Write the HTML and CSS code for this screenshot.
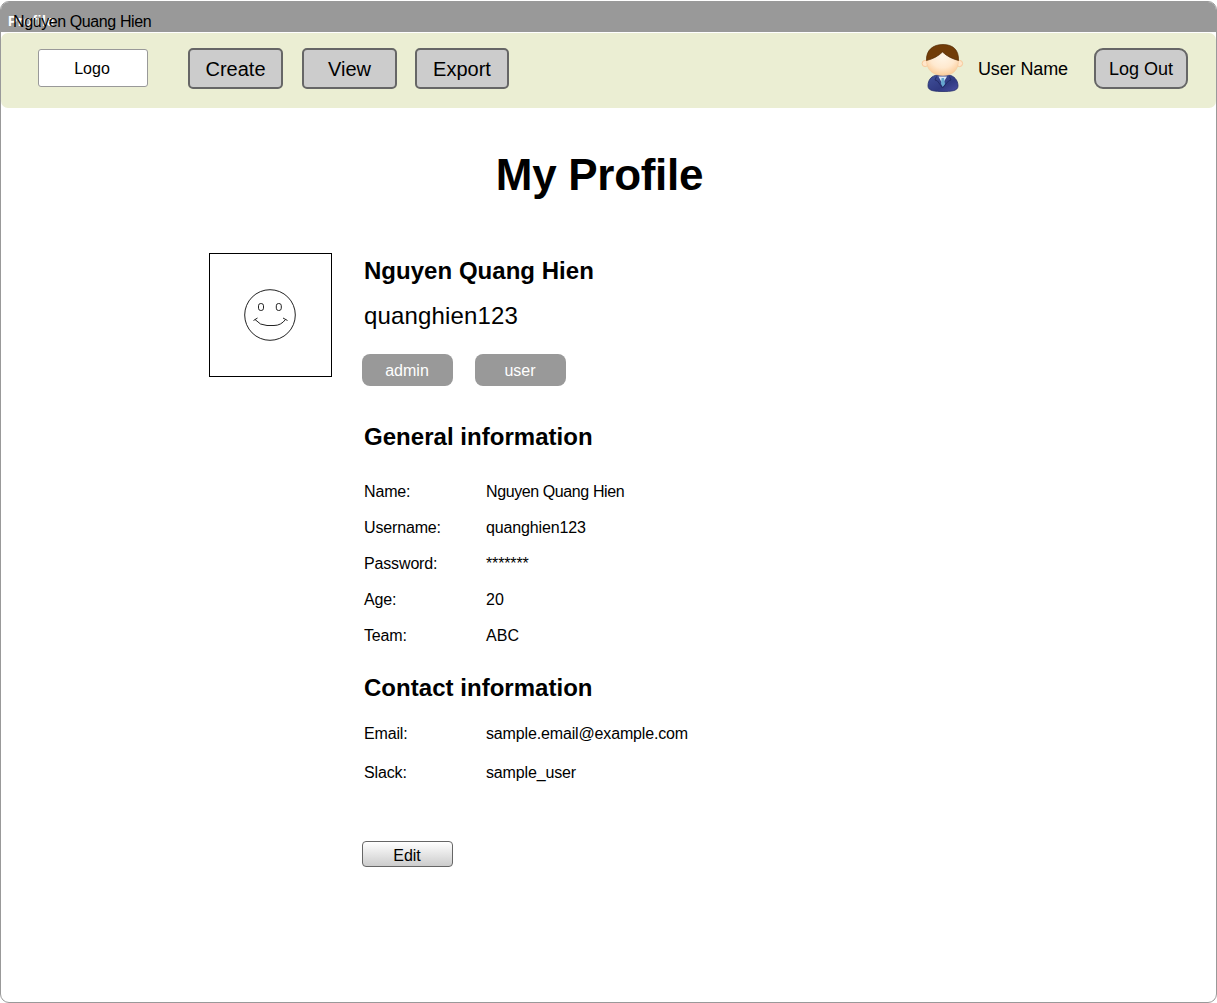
FILE: index.html
```html
<!DOCTYPE html>
<html lang="en">
<head>
<meta charset="utf-8">
<title>My Profile</title>
<link rel="stylesheet" href="styles.css">
</head>
<body>
<div class="window">
  <div class="titlebar">
    <span class="window-title">Profile</span>
    <span class="window-user">Nguyen Quang Hien</span>
  </div>
  <header class="header">
    <div class="logo">Logo</div>
    <nav class="nav">
      <button class="button">Create</button>
      <button class="button">View</button>
      <button class="button button-export">Export</button>
    </nav>
    <div class="account">
      <svg class="person" width="44" height="52" viewBox="0 0 44 52">
        <defs>
          <radialGradient id="skin" cx="50%" cy="35%" r="65%">
            <stop offset="0" stop-color="#fff6e8"/><stop offset=".6" stop-color="#ffe9cf"/><stop offset="1" stop-color="#fbcd9b"/>
          </radialGradient>
          <linearGradient id="suit" x1="0" y1="0" x2="1" y2="1">
            <stop offset="0" stop-color="#41519b"/><stop offset=".6" stop-color="#303a82"/><stop offset="1" stop-color="#4b4fa4"/>
          </linearGradient>
        </defs>
        <path d="M7 44C7 37 11 34 16 33H28C33 34 37 38 37 44C37 49 30 49.500 22 49.500S7 49 7 44Z" fill="url(#suit)" stroke="#252d69" stroke-width=".8"/>
        <circle cx="4.200" cy="21.500" r="3.100" fill="#ffe6ca" stroke="#f7c99b"/>
        <circle cx="38.500" cy="21.500" r="3.100" fill="#ffe6ca" stroke="#f7c99b"/>
        <path d="M5.500 18C5.500 9 13 4 22 4S37.500 9 37.500 18C37.500 28 32 33.500 22 33.500S5.500 28 5.500 18Z" fill="url(#skin)" stroke="#f5c99c" stroke-width=".6"/>
        <path d="M17.500 34.500L21.500 42L26 34.500Z" fill="#dce9f8"/>
        <path d="M20.500 36H23L24 42L21.800 45L20 42Z" fill="#65a6cf"/>
        <path d="M15.500 34.500L14 38L16.500 39L21.500 46L27.500 39L30 38L28.500 34.500" fill="none" stroke="#202963" stroke-width=".9"/>
        <path d="M5.500 18.500C5 8 12 2.500 22 2.500S38 8 37.500 18.500C32 17 26 14.500 21.500 10C17.500 14 12 17 5.500 18.500Z" fill="#713c08" stroke="#512905" stroke-width=".7"/>
      </svg>
      <span class="account-name">User Name</span>
      <button class="button button-logout">Log Out</button>
    </div>
  </header>
  <h1 class="page-title">My Profile</h1>
  <main class="profile">
    <svg class="picture" width="123" height="125" viewBox="0 0 123 125" fill="none" stroke="#000">
      <rect x=".5" y=".5" width="122" height="123"/>
      <g stroke="#222">
        <circle cx="61" cy="62" r="25.300"/>
        <rect x="49.500" y="50.500" width="5" height="7" rx="2.300"/>
        <rect x="67.300" y="50.500" width="5" height="7" rx="2.300"/>
        <path d="M44.500 67.500L48.500 65M74 65L78.500 67.500M46 66.500Q51 72.500 58 72.500H65Q72 72.500 76.500 66.500"/>
      </g>
    </svg>
    <div class="details">
      <h2 class="heading">Nguyen Quang Hien</h2>
      <p class="handle">quanghien123</p>
      <div class="roles"><span class="role">admin</span><span class="role">user</span></div>
      <h2 class="heading general">General information</h2>
      <dl class="fields">
        <dt>Name:</dt><dd class="tight">Nguyen Quang Hien</dd>
        <dt>Username:</dt><dd>quanghien123</dd>
        <dt>Password:</dt><dd>*******</dd>
        <dt>Age:</dt><dd class="wide">20</dd>
        <dt>Team:</dt><dd class="wide">ABC</dd>
      </dl>
      <h2 class="heading contact">Contact information</h2>
      <dl class="fields contact-fields">
        <dt>Email:</dt><dd>sample.email@example.com</dd>
        <dt>Slack:</dt><dd>sample_user</dd>
      </dl>
      <button class="edit">Edit</button>
    </div>
  </main>
</div>
</body>
</html>
```
FILE: styles.css
```css
* { box-sizing: border-box; }
body {
  margin: 0;
  padding-top: 1px;
  background: #fff;
  color: #000;
  font: 16px/20px "Liberation Sans", Arial, sans-serif;
}
h1, h2, p, dl, dd { margin: 0; }
button { font-family: inherit; color: #000; padding: 2px 0 0; }
.window {
  height: 1002px;
  border: 1px solid #999;
  border-radius: 9px;
  overflow: hidden;
}
.titlebar {
  position: relative;
  height: 30px;
  padding: 9px 7px;
  background: #999;
}
.window-title { display: block; color: #fff; font-size: 14px; font-weight: bold; letter-spacing: .4px; }
.window-user { position: absolute; left: 12px; top: 10px; letter-spacing: -.4px; white-space: nowrap; }
.header {
  display: flex;
  align-items: flex-start;
  height: 75px;
  margin-top: 1px;
  padding: 15px 28px 0 37px;
  border-radius: 7px;
  background: #ebeed3;
}
.logo {
  width: 110px;
  height: 38px;
  margin-top: 1px;
  padding-right: 2px;
  border: 1px solid #999;
  border-radius: 3px;
  background: #fff;
  line-height: 37px;
  text-align: center;
}
.nav { display: flex; gap: 19px; margin-left: 40px; }
.button {
  width: 95px;
  height: 41px;
  border: 2px solid #666;
  border-radius: 5px;
  background: #ccc;
  font-size: 20px;
}
.button-export { width: 94px; margin-left: -1px; }
.account { display: flex; align-items: flex-start; margin-left: auto; }
.person { margin-top: -6px; }
.account-name { margin: 11px 26px 0 13px; font-size: 18px; letter-spacing: -.1px; white-space: nowrap; }
.button-logout { width: 94px; border-radius: 9px; font-size: 18px; }
.page-title {
  height: 145px;
  padding: 42px 18px 0 0;
  font-size: 44px;
  line-height: 50px;
  letter-spacing: -.3px;
  text-align: center;
}
.profile { display: flex; gap: 30px; padding-left: 208px; }
.picture { flex: none; }
.details { width: 360px; }
.heading { padding: 4px 0 0 2px; font-size: 24px; line-height: 28px; letter-spacing: .03px; }
.handle { margin-top: 16px; padding-left: 2px; font-size: 24px; line-height: 30px; letter-spacing: .15px; }
.roles { display: flex; gap: 22px; margin-top: 23px; }
.role {
  width: 91px;
  height: 32px;
  padding-right: 1px;
  border-radius: 8px;
  background: #999;
  color: #fff;
  line-height: 33px;
  text-align: center;
}
.general { margin-top: 33px; }
.fields {
  display: grid;
  grid-template-columns: 122px 1fr;
  grid-auto-rows: 36px;
  margin-top: 23px;
  padding-left: 2px;
  line-height: 36px;
  letter-spacing: -.15px;
}
.tight { letter-spacing: -.4px; }
.wide { letter-spacing: .1px; }
.contact { margin-top: 16px; }
.contact-fields { grid-auto-rows: 39px; line-height: 39px; margin-top: 12px; }
.edit {
  width: 91px;
  height: 26px;
  margin-top: 49px;
  padding: 3px 1px 0 0;
  border: 1px solid #666;
  border-radius: 4px;
  background: linear-gradient(#fff, #ccc);
  font-size: 16px;
}
```
